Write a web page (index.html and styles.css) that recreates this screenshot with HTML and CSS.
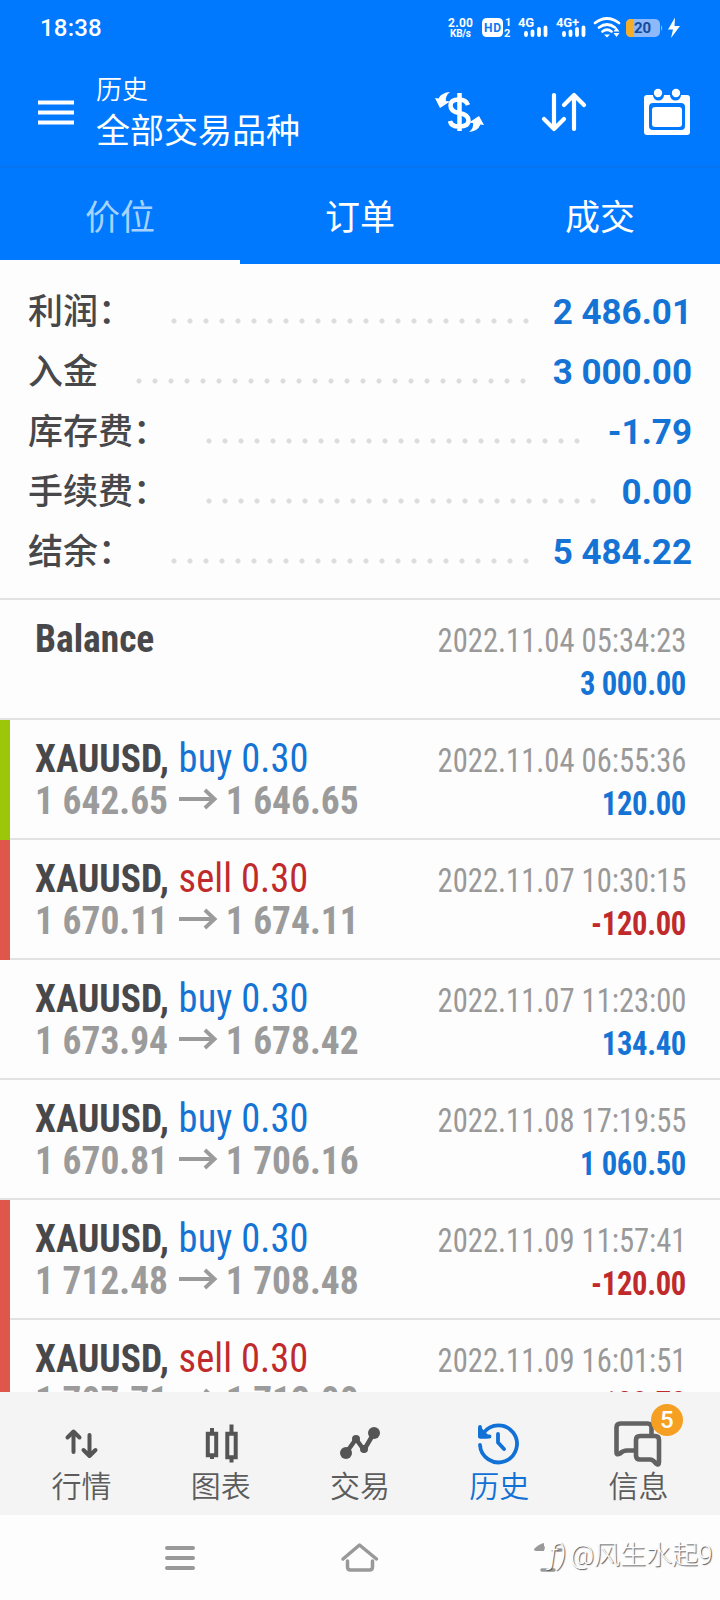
FILE: index.html
```
<!DOCTYPE html>
<html lang="zh-CN">
<head>
<meta charset="utf-8">
<title>历史</title>
<link rel="stylesheet" href="styles.css">
</head>
<body>
<div class="screen">
  <header class="top">
    <div class="status">
      <span class="clock">18:38</span>
      <svg class="status-icons" width="232" height="24" viewBox="0 0 232 24" fill="#fff">
        <g class="st"><text x="0" y="9.5" font-size="12" textLength="25">2.00</text><text x="2" y="20" font-size="10" textLength="21">KB/s</text></g>
        <path fill-rule="evenodd" d="M39 1h11q5 0 5 5v9q0 5-5 5h-11q-5 0-5-5v-9q0-5 5-5z"/>
        <g class="st"><text x="36" y="15" font-size="12" textLength="17" fill="#0a78f5">HD</text><text x="57" y="9" font-size="11">1</text><text x="56" y="20" font-size="11">2</text>
        <text x="70" y="10" font-size="13" textLength="16">4G</text><text x="108" y="10" font-size="13" textLength="23">4G+</text></g>
        <g stroke="#fff" stroke-width="3.8" stroke-linecap="round"><path d="M78 18v-2M84.500 18v-3.500M91 18v-6M97.500 18v-7.500M116 18v-2M122.500 18v-3.500M129 18v-6M135.500 18v-7.500"/></g>
        <g fill="none" stroke="#fff" stroke-width="2.800" stroke-linecap="round"><path d="M147 6q12-9 24 0M151 10.500q8-6 16 0M154.500 14.500q4.500-3.500 9 0"/></g>
        <path d="M156 17.500h6l-3 3zM165.500 14.500l3-4 3 4zM165.500 16l3 4 3-4z"/>
        <rect x="178" y="2" width="34" height="18" rx="5" fill="#8db9fb"/><path d="M183 2h3v18h-3q-5 0-5-5v-8q0-5 5-5z" fill="#f3ad28"/><path d="M213 8q2.500 3 0 6z" fill="#8db9fb"/>
        <g class="st"><text x="186" y="16" font-size="15" textLength="17" fill="#144a9c">20</text></g>
        <path d="M227 .5l-7 12h5l-2 8.500 9-12h-5.500z"/>
      </svg>
    </div>
    <div class="bar">
      <svg width="36" height="26" viewBox="0 0 36 26" stroke="#fff" stroke-width="4.200"><path d="M0 2.500h36M0 12.500h36M0 22.500h36"/></svg>
      <div class="heading"><div class="sub">历史</div><div class="main">全部交易品种</div></div>
      <svg class="i-dollar" width="50" height="46" viewBox="0 0 50 46" fill="none" stroke="#fff" stroke-width="4.500">
        <path d="M33 15q-2-5.500-9-5.500-8.500 0-8.500 6t8.500 7.500q9.500 1.500 9.500 7.500t-9.500 6q-8 0-9-5.500M24.500 3v38"/>
        <path fill="#fff" stroke="none" d="M15 2q-5 4-4 9l4 .5-10 6.500-5-10 3.500 .5q3-6 11.500-6.500zM34 42q5-4 4-9l-4-.5 10-6.500 5 9-3.500-.5q-3 7-11.500 7.500z"/>
      </svg>
      <svg class="i-sort" width="46" height="40" viewBox="0 0 46 40" fill="none" stroke="#fff" stroke-width="4.200" stroke-linecap="round" stroke-linejoin="round"><path d="M13 2v34M3 26l10 10 10-10M33 36V2M23 12L33 2l10 10"/></svg>
      <svg class="i-cal" width="46" height="48" viewBox="0 0 46 48" fill="#fff"><path fill-rule="evenodd" d="M3 7h6a5.500 5.500 0 0 0 11 0h6a5.500 5.500 0 0 0 11 0h6q3 0 3 3v34q0 3-3 3H3q-3 0-3-3V10q0-3 3-3zM9 15q-4 0-4 4v19q0 4 4 4h28q4 0 4-4V19q0-4-4-4z"/><rect x="8" y="19" width="30" height="20" rx="3"/><circle cx="14" cy="5" r="4.200"/><circle cx="32" cy="5" r="4.200"/></svg>
    </div>
    <nav class="tabs"><span class="tab on">价位</span><span class="tab">订单</span><span class="tab">成交</span></nav>
  </header>

  <section class="summary">
    <div class="sum"><span>利润：</span><i class="dots"></i><b>2 486.01</b></div>
    <div class="sum"><span>入金</span><i class="dots"></i><b>3 000.00</b></div>
    <div class="sum"><span>库存费：</span><i class="dots"></i><b>-1.79</b></div>
    <div class="sum"><span>手续费：</span><i class="dots"></i><b>0.00</b></div>
    <div class="sum"><span>结余：</span><i class="dots"></i><b>5 484.22</b></div>
  </section>

  <main class="list">
    <div class="deal"><div class="left"><div><b>Balance</b></div></div><div class="right"><div>2022.11.04 05:34:23</div><b class="up">3 000.00</b></div></div>
    <div class="deal tp"><div class="left"><div><b>XAUUSD,</b> <span class="up">buy 0.30</span></div><div class="price">1 642.65<svg class="arr" viewBox="0 0 40 20"><path d="M1 10h37M28 1l10 9-10 9"/></svg>1 646.65</div></div><div class="right"><div>2022.11.04 06:55:36</div><b class="up">120.00</b></div></div>
    <div class="deal sl"><div class="left"><div><b>XAUUSD,</b> <span class="down">sell 0.30</span></div><div class="price">1 670.11<svg class="arr" viewBox="0 0 40 20"><path d="M1 10h37M28 1l10 9-10 9"/></svg>1 674.11</div></div><div class="right"><div>2022.11.07 10:30:15</div><b class="down">-120.00</b></div></div>
    <div class="deal"><div class="left"><div><b>XAUUSD,</b> <span class="up">buy 0.30</span></div><div class="price">1 673.94<svg class="arr" viewBox="0 0 40 20"><path d="M1 10h37M28 1l10 9-10 9"/></svg>1 678.42</div></div><div class="right"><div>2022.11.07 11:23:00</div><b class="up">134.40</b></div></div>
    <div class="deal"><div class="left"><div><b>XAUUSD,</b> <span class="up">buy 0.30</span></div><div class="price">1 670.81<svg class="arr" viewBox="0 0 40 20"><path d="M1 10h37M28 1l10 9-10 9"/></svg>1 706.16</div></div><div class="right"><div>2022.11.08 17:19:55</div><b class="up">1 060.50</b></div></div>
    <div class="deal sl"><div class="left"><div><b>XAUUSD,</b> <span class="up">buy 0.30</span></div><div class="price">1 712.48<svg class="arr" viewBox="0 0 40 20"><path d="M1 10h37M28 1l10 9-10 9"/></svg>1 708.48</div></div><div class="right"><div>2022.11.09 11:57:41</div><b class="down">-120.00</b></div></div>
    <div class="deal sl"><div class="left"><div><b>XAUUSD,</b> <span class="down">sell 0.30</span></div><div class="price">1 707.71<svg class="arr" viewBox="0 0 40 20"><path d="M1 10h37M28 1l10 9-10 9"/></svg>1 712.00</div></div><div class="right"><div>2022.11.09 16:01:51</div><b class="down">-128.70</b></div></div>
  </main>

  <nav class="nav">
    <div class="item"><svg width="48" height="44" viewBox="0 0 48 44" fill="none" stroke="#555" stroke-width="4" stroke-linecap="round" stroke-linejoin="round"><path d="M15.500 29V8.500M9.500 14.500l6-6 6 6M31.500 12v20.500M25.500 27l6 6 6-6"/></svg><span>行情</span></div>
    <div class="item"><svg width="48" height="44" viewBox="0 0 48 44" fill="none" stroke="#555" stroke-width="4"><path d="M10.800 10.800h8.400v21.400h-8.400zM30.300 10.800h8.400v23.400h-8.400zM15 5v6M15 32v4M34.500 1.500v9M34.500 34.500v5"/></svg><span>图表</span></div>
    <div class="item"><svg width="48" height="44" viewBox="0 0 48 44" fill="none" stroke="#555" stroke-width="4.500" stroke-linejoin="round" stroke-linecap="round"><path d="M10 30l10-14 8 11 10-17"/><g fill="#555" stroke="none"><circle cx="10" cy="30" r="6"/><circle cx="38" cy="10" r="6"/><circle cx="20" cy="16" r="4"/><circle cx="28" cy="26" r="4"/></g></svg><span>交易</span></div>
    <div class="item on"><svg width="48" height="44" viewBox="0 0 48 44" fill="none" stroke="#1271d6" stroke-width="3.800" stroke-linecap="round" stroke-linejoin="round"><path d="M5 22A18.500 18.500 0 1 0 8.500 10M5 4v9.500h9.500M23 11v8.500l6 6.500"/><path d="M5 6v7.500h7z" fill="#1271d6"/></svg><span>历史</span></div>
    <div class="item"><svg width="48" height="44" viewBox="0 0 48 44" fill="none" stroke="#626262" stroke-width="4.600" stroke-linejoin="round" stroke-linecap="round"><path d="M20 27.500h-7q-4 0-7 3-3.500 2-3.500-1V4.500q0-4 4-4h27q4 0 4 4v8"/><path d="M26 13h15q4 0 4 4v22q0 4-3 1.500-3-4-6-4H26q-4 0-4-4V17q0-4 4-4z"/></svg><span>信息</span><em class="badge">5</em></div>
  </nav>

  <footer class="sys">
    <svg width="30" height="26" viewBox="0 0 30 26" stroke="#999" stroke-width="4" stroke-linecap="round"><path d="M2 3h26M2 13h26M2 23h26"/></svg>
    <svg width="40" height="30" viewBox="0 0 40 30" fill="none" stroke="#999" stroke-width="3.500" stroke-linecap="round" stroke-linejoin="round"><path d="M3 17L19.500 3 36.500 17M7.500 19v6q0 3 3 3h19q3 0 3-3v-6"/></svg>
    <svg width="30" height="30" viewBox="0 0 30 30" fill="none" stroke="#999" stroke-width="3.500" stroke-linecap="round"><path fill="#999" stroke="none" d="M0 7q5-5 10-6v3l1 1-1 4h-7q-3 0-3-2z"/><path d="M24 8h3M8 28h12"/></svg>
    <span class="mark"><i>ƒ)</i>@风生水起9</span>
  </footer>
</div>
</body>
</html>
```
FILE: styles.css
```
* { box-sizing: border-box; }
body { margin: 0; font-family: Roboto, "Noto Sans CJK SC", sans-serif; background: #fdfdfd; }
.screen { width: 720px; height: 1600px; display: flex; flex-direction: column; overflow: hidden; }
svg { display: block; flex: none; overflow: visible; }

.top { height: 264px; background: #0079fe; color: #fff; flex: none; }
.status { height: 56px; padding: 17px 40px 0 40px; display: flex; justify-content: space-between; align-items: flex-start; }
.clock { font-size: 24px; line-height: 22px; font-weight: 500; letter-spacing: .2px; }
.st { font-family: Roboto, sans-serif; font-weight: 700; }
.bar { height: 110px; padding: 0 30px 0 38px; display: flex; align-items: flex-start; }
.bar > svg:first-child { margin-top: 44px; }
.heading { margin: 15px 0 0 22px; flex: 1; }
.sub { font-size: 26px; line-height: 38px; font-weight: 350; }
.main { font-size: 34px; line-height: 45px; }
.i-dollar { margin-top: 34px; }
.i-sort { margin: 37px 0 0 56px; }
.i-cal { margin: 32px 0 0 57px; width: 46px; }
.tabs { height: 98px; display: flex; border-top: 2px solid #0673f0; }
.tab { flex: 1; text-align: center; font-size: 35px; line-height: 86px; padding-top: 8px; border-bottom: 4px solid transparent; height: 96px; }
.tab.on { color: #a5d2ff; border-color: #fdfdfd; }

.summary { height: 336px; flex: none; padding: 15px 28px 0 28px; border-bottom: 2px solid #e2e2e2; }
.sum { display: flex; height: 60px; font-size: 35px; color: #48484a; font-weight: 500; }
.sum span { line-height: 68px; }
.sum b { color: #1473d4; font-size: 35px; line-height: 68px; }
.dots { flex: 1; margin: 38px 23px 0 38px; height: 8px; background: radial-gradient(circle at 3px 4px, #dcdcdc 2px, transparent 3px) 0 0 / 16px 8px; }

.list { height: 792px; flex: none; overflow: hidden; }
.deal { height: 120px; display: flex; justify-content: space-between; padding: 17px 34px 0 35px; font-stretch: 75%; background: linear-gradient(#e2e2e2, #e2e2e2) 0 100% / 100% 2px no-repeat; }
.deal.tp { border-left: 10px solid #9cc60a; padding-left: 25px; }
.deal.sl { border-left: 10px solid #de574a; padding-left: 25px; }
.left { font-size: 39px; line-height: 43px; color: #48484a; transform: scaleX(.96); transform-origin: 0 0; white-space: nowrap; }
.left span { margin-left: 1px; font-size: 40px; letter-spacing: .1px; line-height: 1; }
.left > div:first-child { height: 43px; padding-top: 1px; }
.right { margin-top: 2px; font-size: 33px; line-height: 43px; color: #999; text-align: right; transform: scaleX(.927); transform-origin: 100% 0; white-space: nowrap; }
.right b { letter-spacing: -.35px; margin-right: .5px; }
.price { color: #9b9b9b; font-weight: 700; display: flex; }
.arr { width: 40px; height: 20px; margin: 9px 10px 0; fill: none; stroke: #9b9b9b; stroke-width: 4; }
.up { color: #1473d4; }
.down { color: #c02a2c; }

.nav { height: 123px; flex: none; background: #f4f4f4; display: grid; grid-template-columns: repeat(5, 1fr); padding: 31px 12px 0; }
.item { display: flex; flex-direction: column; align-items: center; position: relative; color: #5c5c5c; font-size: 30px; }
.item svg { height: 44px; }
.item span { line-height: 40px; font-weight: 350; }
.item.on { color: #1271d6; }
.badge { position: absolute; left: 82px; top: -19px; width: 32px; height: 32px; border-radius: 50%; background: #f59f23; color: #fff; font: 500 24px/32px Roboto, sans-serif; text-align: center; }
.sys { flex: 1; background: #fdfdfd; display: flex; align-items: flex-start; padding: 30px 0 0 165px; position: relative; }
.sys svg + svg { margin: -3px 0 0 145px; }
.sys svg + svg + svg { margin-left: 154px; }
.mark { position: absolute; left: 549px; top: 22px; font-size: 26px; line-height: 36px; color: #fff; font-weight: 300; text-shadow: 1px 1px 1px #555; white-space: nowrap; }
.mark i { font-size: 27px; margin-right: 4px; }
```
